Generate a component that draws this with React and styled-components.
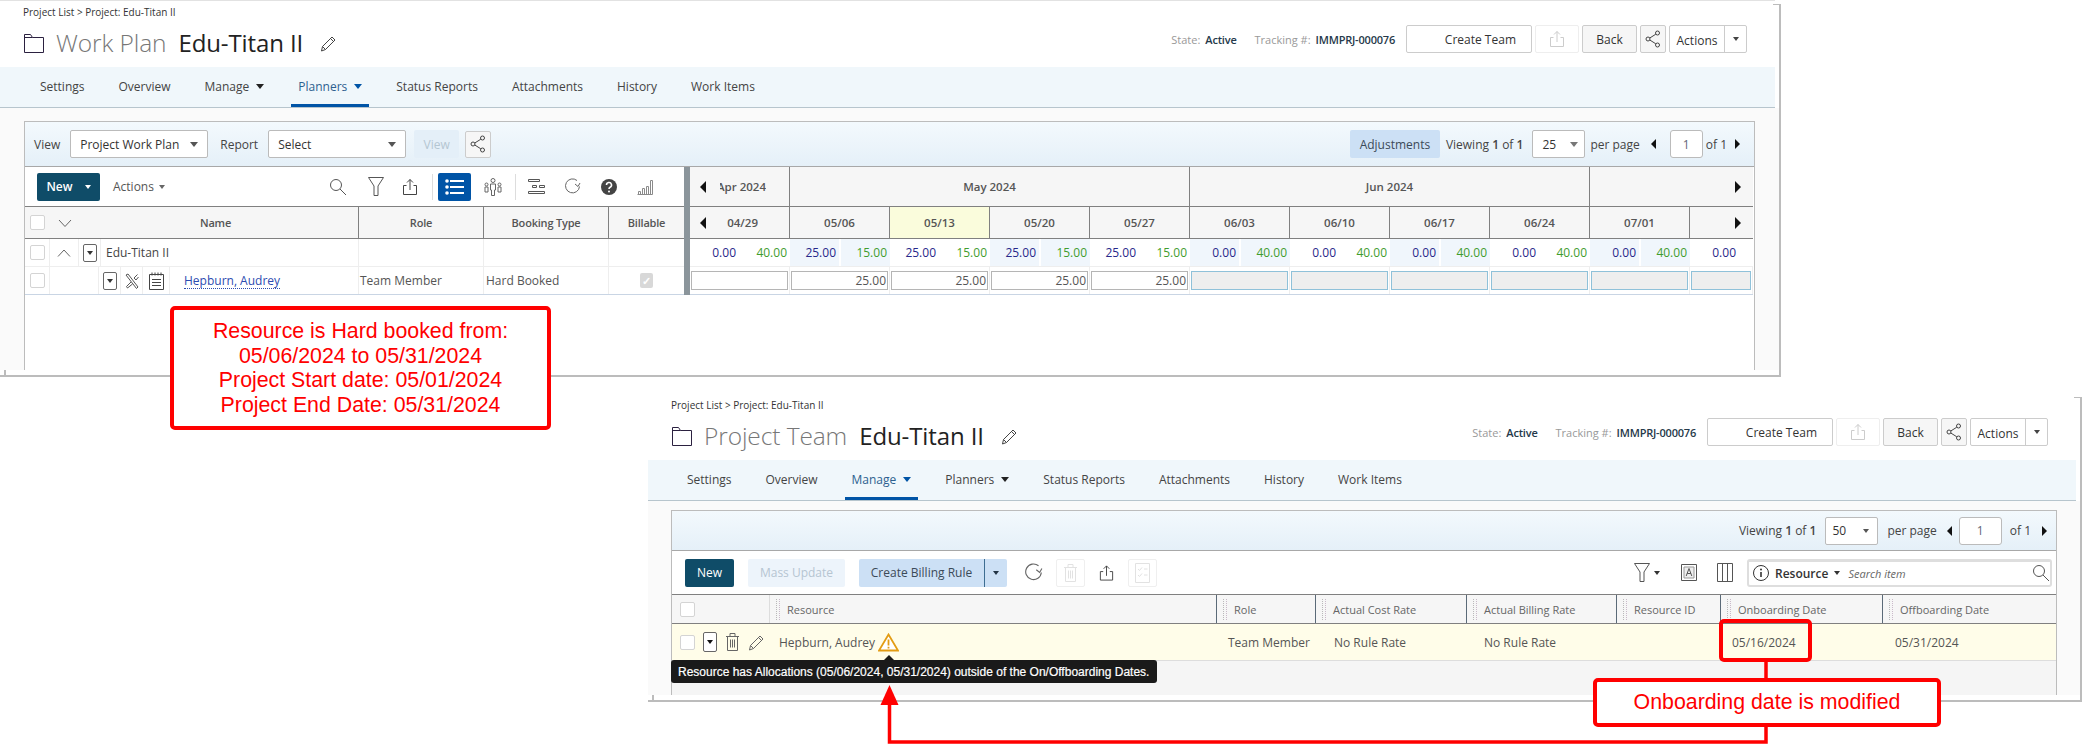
import React from 'react';
import styled, { createGlobalStyle } from 'styled-components';

const GlobalStyle = createGlobalStyle`
  html, body {
    margin: 0;
    padding: 0;
    background: #fff;
    font-family: "Open Sans", "Liberation Sans", sans-serif;
    font-size: 12px;
    color: #444;
  }
  * { box-sizing: border-box; }
`;

const Page = styled.div`
  position: relative;
  width: 2094px;
  height: 756px;
  overflow: hidden;
  background: #fff;
  &::before {
    content: '';
    position: absolute;
    left: 0;
    top: 0;
    width: 1775px;
    height: 1px;
    background: #e2e2e2;
  }
`;

// each screenshot sits on the page like a window on a canvas
const Window = styled.section`
  position: absolute;
  left: ${p => p.$left}px;
  top: ${p => p.$top}px;
  width: ${p => p.$width}px;
  height: ${p => p.$height}px;
  display: flex;
  flex-direction: column;
  padding-bottom: 5px;
  border-bottom: 2px solid #bcbcbc;
  &::before {
    content: '';
    position: absolute;
    left: ${p => p.$stub}px;
    bottom: 0;
    width: 2px;
    height: 5px;
    background: #bcbcbc;
  }
  &::after {
    content: '';
    position: absolute;
    right: 0;
    top: 4px;
    bottom: 0;
    width: 6px;
    border-top: 1px solid #bcbcbc;
    border-right: 2px solid #bcbcbc;
  }
`;

const Header = styled.header`
  height: 67px;
  flex: none;
  display: flex;
  justify-content: space-between;
  padding: 0 34px 0 23px;
`;

const Crumb = styled.div`
  font-size: 10px;
  line-height: 14px;
  padding-top: 5px;
  color: #333;
`;

const TitleRow = styled.h1`
  margin: 9px 0 0 1px;
  display: flex;
  align-items: center;
  height: 30px;
  font-weight: 400;
  font-size: 24px;
  letter-spacing: -0.1px;
  color: #222;
  svg { flex: none; }
`;

const TitleName = styled.span`
  padding-bottom: 2px;
`;

const TitleLabel = styled.span`
  color: #777;
  font-weight: 300;
  font-size: 24.5px;
  padding-bottom: 2px;
  margin: 0 12px 0 12px;
`;

const TitleEdit = styled.span`
  display: flex;
  margin-left: 17px;
`;

const HeadRight = styled.div`
  display: flex;
  align-items: flex-start;
  padding-top: 25px;
`;

const Meta = styled.div`
  display: flex;
  gap: 18px;
  height: 28px;
  align-items: center;
  margin-right: 11px;
  font-size: 11px;
  color: #999;
  b {
    font-weight: 600;
    letter-spacing: -0.2px;
    color: #25394a;
    margin-left: 5px;
  }
`;

const HeadButtons = styled.div`
  display: flex;
  gap: 3px;
`;

const HeadButton = styled.button`
  width: ${p => p.$w}px;
  height: 28px;
  padding: 0 ${p => p.$pad || 0}px 0 0;
  display: flex;
  align-items: center;
  justify-content: ${p => (p.$pad ? 'flex-end' : 'center')};
  background: ${p => p.$bg || '#fff'};
  border: 1px solid ${p => (p.$faint ? '#eee' : '#ccc')};
  border-radius: 2px;
  font: inherit;
  color: #333;
`;

const SplitMenu = styled.div`
  width: 78px;
  height: 28px;
  display: flex;
  border: 1px solid #ccc;
  border-radius: 2px;
  color: #333;
  span {
    width: 55px;
    line-height: 29px;
    text-align: center;
    border-right: 1px solid #ccc;
  }
  div {
    flex: 1;
    display: flex;
    align-items: center;
    justify-content: center;
  }
`;

const Nav = styled.nav`
  flex: none;
  height: 41px;
  margin-right: 6px;
  display: flex;
  gap: 20px;
  padding-left: ${p => p.$left}px;
  background: #f0f7fb;
  border-bottom: 1px solid #b7c5cd;
`;

const NavItem = styled.a`
  position: relative;
  display: flex;
  align-items: center;
  gap: 7px;
  padding: 0 7px 2px;
  color: ${p => (p.$active ? '#2d5f8f' : '#444')};
  &::after {
    content: '';
    display: ${p => (p.$active ? 'block' : 'none')};
    position: absolute;
    left: 0;
    right: 0;
    bottom: 0;
    height: 3px;
    background: #0054a6;
  }
`;

const Caret = styled.i`
  display: inline-block;
  flex: none;
  margin-left: ${p => p.$l || 0}px;
  border-left: ${p => p.$size || 4}px solid transparent;
  border-right: ${p => p.$size || 4}px solid transparent;
  border-top: ${p => (p.$size || 4) + 1}px solid ${p => p.$color || '#333'};
`;

const Content = styled.main`
  flex: 1;
  min-height: 0;
  display: flex;
  margin-right: 2px;
  padding: ${p => p.$top}px 0 0 ${p => p.$left}px;
  background: #fafafa;
`;

const Panel = styled.div`
  width: ${p => p.$width}px;
  display: flex;
  flex-direction: column;
  background: #fff;
  border: 1px solid #bcbcbc;
  border-bottom: 0;
`;

const Toolbar = styled.div`
  flex: none;
  height: ${p => p.$h}px;
  display: flex;
  align-items: center;
  padding: ${p => p.$pad};
  background: linear-gradient(#f3f9fd, #e5f0f8);
  border-bottom: 1px solid #a8a8a8;
`;

const Label = styled.span`
  margin: 0 ${p => p.$r || 0}px 0 ${p => (p.$auto ? 'auto' : `${p.$l || 0}px`)};
  white-space: nowrap;
  color: #444;
  b { font-weight: 600; }
`;

const Select = styled.div`
  width: ${p => p.$w}px;
  height: 28px;
  flex: none;
  margin-left: ${p => p.$l || 0}px;
  display: flex;
  align-items: center;
  justify-content: space-between;
  padding: 0 ${p => p.$arrow || 9}px 0 ${p => p.$text || 9}px;
  background: #fff;
  border: 1px solid #bbb;
  border-radius: 2px;
  color: #333;
`;

const SoftButton = styled.button`
  width: ${p => p.$w}px;
  height: 28px;
  flex: none;
  margin-left: ${p => (p.$auto ? 'auto' : `${p.$l || 0}px`)};
  border: 0;
  border-radius: 2px;
  background: ${p => p.$bg};
  color: ${p => p.$color};
  font: inherit;
`;

const ShareBox = styled.div`
  width: 26px;
  height: 27px;
  margin-left: 6px;
  display: flex;
  align-items: center;
  justify-content: center;
  background: #f6f6f6;
  border: 1px solid #ccc;
  border-radius: 2px;
`;

const PageInput = styled.div`
  width: ${p => p.$w}px;
  height: 28px;
  flex: none;
  margin: 0 ${p => p.$r}px 0 ${p => p.$l}px;
  display: flex;
  align-items: center;
  justify-content: center;
  background: #fff;
  border: 1px solid #bbb;
  border-radius: 3px;
  color: #667;
`;

const Tri = styled.i`
  flex: none;
  display: block;
  margin: ${p => p.$m || 0};
  border-top: ${p => p.$h || 4}px solid transparent;
  border-bottom: ${p => p.$h || 4}px solid transparent;
  ${p => (p.$dir === 'left' ? 'border-right' : 'border-left')}: ${p => p.$w || 4}px solid #111;
`;

const PlanBody = styled.div`
  flex: 1;
  display: flex;
  align-items: flex-start;
`;

const LeftPane = styled.div`
  width: 659px;
  flex: none;
`;

const Splitter = styled.div`
  width: 6px;
  height: 128px;
  flex: none;
  background: #8b959b;
`;

const RightPane = styled.div`
  width: 1063px;
  flex: none;
`;

const ToolRow = styled.div`
  height: ${p => p.$h}px;
  display: flex;
  align-items: center;
  padding: ${p => p.$pad};
  border-bottom: 1px solid #808080;
`;

const DarkButton = styled.button`
  height: 28px;
  width: ${p => p.$w}px;
  flex: none;
  display: flex;
  align-items: center;
  justify-content: center;
  gap: 12px;
  border: 0;
  border-radius: 2px;
  background: #0f4c68;
  color: #fff;
  font: inherit;
  font-weight: ${p => (p.$bold ? 600 : 400)};
`;

const GhostMenu = styled.div`
  display: flex;
  align-items: center;
  gap: 5px;
  margin-left: 13px;
  color: #555;
`;

const ToolGroup = styled.div`
  margin-left: auto;
  display: flex;
  align-items: center;
  height: 28px;
`;

const Slot = styled.span`
  width: ${p => p.$w}px;
  flex: none;
  margin-left: ${p => p.$l || 0}px;
  display: flex;
  align-items: center;
  justify-content: center;
`;

const ToolSep = styled.span`
  width: 1px;
  height: 26px;
  margin: 0 ${p => p.$r}px 0 ${p => p.$l}px;
  flex: none;
  background: #ddd;
`;

const ActiveTool = styled.span`
  width: 33px;
  height: 28px;
  flex: none;
  display: flex;
  align-items: center;
  justify-content: center;
  border-radius: 2px;
  background: #0054a6;
`;

const PlanGrid = styled.div`
  display: grid;
  grid-template-columns: 334px 125px 125px 75px;
  height: ${p => p.$h}px;
  background: ${p => p.$bg || '#fff'};
  border-bottom: 1px solid ${p => p.$line};
`;

const HeadCell = styled.div`
  display: flex;
  align-items: center;
  justify-content: center;
  font-size: 11px;
  font-weight: 600;
  letter-spacing: -0.2px;
  color: #555;
  border-right: 1px solid #808080;
  &:last-child { border-right: 0; }
`;

const BodyCell = styled.div`
  display: flex;
  align-items: center;
  justify-content: ${p => (p.$center ? 'center' : 'flex-start')};
  padding-left: ${p => p.$pad || 0}px;
  color: #555;
  border-right: 1px solid #eee;
  &:last-child { border-right: 0; }
`;

const Check = styled.span`
  display: block;
  width: 15px;
  height: 15px;
  flex: none;
  background: #fff;
  border: 1.5px solid #d4d4d4;
  border-radius: 2px;
`;

const SlotCell = styled.span`
  width: ${p => p.$w}px;
  flex: none;
  align-self: stretch;
  display: flex;
  align-items: center;
  justify-content: center;
  border-right: ${p => (p.$plain ? '0' : '1px solid #eee')};
`;

const HeadLabel = styled.span`
  flex: 1;
  padding-right: 6px;
  text-align: center;
`;

const RowMenu = styled.span`
  width: ${p => p.$w || 14}px;
  height: ${p => p.$h || 18}px;
  flex: none;
  display: flex;
  align-items: center;
  justify-content: center;
  border: 1px solid #666;
  border-radius: 2px;
  background: #fff;
`;

const PersonLink = styled.a`
  margin-left: 14px;
  color: #2c4bb0;
  border-bottom: 1px dotted #2c4bb0;
  line-height: 15px;
`;

const TickBox = styled.span`
  width: 13px;
  height: 15px;
  display: flex;
  align-items: center;
  justify-content: center;
  border-radius: 2px;
  background: #d8d8d8;
  color: #fff;
  font-size: 11px;
  font-weight: 700;
`;

const TimeRow = styled.div`
  display: flex;
  height: ${p => p.$h}px;
  background: #fff;
  border-bottom: 1px solid ${p => p.$line};
`;

const TimeHead = styled.div`
  width: ${p => p.$w}px;
  flex: none;
  display: flex;
  align-items: center;
  justify-content: ${p => p.$justify || 'center'};
  padding: ${p => p.$pad || 0};
  font-size: 11.5px;
  font-weight: 600;
  color: #555;
  background: ${p => (p.$today ? '#fafcdc' : '#f6f6f6')};
  border-right: 1px solid #808080;
  &:last-child { border-right: 0; }
`;

const ClipText = styled.span`
  width: ${p => p.$w}px;
  margin-left: ${p => p.$l}px;
  overflow: hidden;
  display: flex;
  justify-content: flex-end;
  white-space: nowrap;
`;

const HoursCol = styled.div`
  width: ${p => p.$w}px;
  flex: none;
  display: flex;
  gap: 2px;
`;

const Hours = styled.div`
  width: 49px;
  flex: none;
  display: flex;
  align-items: center;
  justify-content: flex-end;
  padding-right: 3px;
  background: ${p => (p.$shade ? '#f0f6fc' : '#fff')};
  color: ${p => (p.$free ? '#3f9d2e' : '#27278a')};
`;

const BookCol = styled.div`
  width: ${p => p.$w}px;
  flex: none;
  padding: 4px 1px;
  border-right: 1px solid #eee;
`;

const BookInput = styled.div`
  height: 19px;
  display: flex;
  align-items: center;
  justify-content: flex-end;
  padding-right: 1px;
  color: #555;
  background: ${p => (p.$locked ? '#eee' : '#fff')};
  border: 1px solid ${p => (p.$locked ? '#8fc1d9' : '#b5b5b5')};
`;

const MassTool = styled.div`
  display: flex;
  align-items: center;
  gap: 13px;
  margin-left: 14px;
`;

const BillingButton = styled.div`
  width: 148px;
  height: 28px;
  display: flex;
  border-radius: 2px;
  background: #cce0f5;
  color: #3b4a58;
  span {
    width: 126px;
    line-height: 28px;
    text-align: center;
    border-right: 1px solid #3d6d91;
  }
  div {
    flex: 1;
    display: flex;
    align-items: center;
    justify-content: center;
  }
`;

const FaintBox = styled.span`
  width: 29px;
  height: 28px;
  display: flex;
  align-items: center;
  justify-content: center;
  border: 1px solid #efefef;
  border-radius: 2px;
`;

const SearchBox = styled.div`
  width: 305px;
  height: 28px;
  margin-left: 14px;
  display: flex;
  align-items: center;
  padding: 0 0 0 4px;
  border: 2px solid #dedede;
  border-top-width: 3px;
  border-radius: 3px;
  b {
    font-weight: 600;
    color: #333;
    margin: 0 6px;
  }
  em {
    margin-left: 8px;
    flex: 1;
    font-size: 11px;
    color: #666;
  }
`;

const TeamGrid = styled.div`
  flex: none;
  display: grid;
  grid-template-columns: 97px 447px 99px 151px 150px 104px 162px 174px;
  height: ${p => p.$h}px;
  background: ${p => p.$bg};
  border-bottom: 1px solid ${p => p.$line};
`;

const ColHead = styled.div`
  position: relative;
  display: flex;
  align-items: center;
  gap: 7px;
  padding-left: 6px;
  font-size: 11px;
  color: #666;
  border-left: ${p => (p.$sizer ? '1px solid #5b6a78' : '1px solid #ddd')};
  &:first-child {
    border-left: 0;
    padding-left: 8px;
  }
`;

const DragDots = styled.i`
  display: block;
  width: 4px;
  height: 21px;
  flex: none;
  border-left: 1px dotted #b9b9b9;
  border-right: 1px dotted #c9b9c9;
`;

const TeamCell = styled.div`
  display: flex;
  align-items: center;
  padding-left: ${p => p.$pad}px;
  color: #555;
  grid-column: span ${p => p.$span || 1};
`;

const RowIcons = styled.div`
  display: flex;
  align-items: center;
  margin-right: 14px;
  gap: 8px;
  margin-left: 8px;
`;

const WarnSlot = styled.span`
  display: flex;
  margin-left: 3px;
`;

const TeamEmpty = styled.div`
  flex: 1;
  background: #f5f5f5;
`;

const Tooltip = styled.div`
  position: absolute;
  left: 671px;
  top: 660px;
  width: 486px;
  height: 23px;
  display: flex;
  align-items: center;
  padding-left: 7px;
  border-radius: 3px;
  background: #1a1a1a;
  color: #fff;
  font-family: "Liberation Sans", Arial, sans-serif;
  font-size: 12px;
  -webkit-text-stroke: 0.2px #fff;
  white-space: nowrap;
  &::before {
    content: '';
    position: absolute;
    left: 213px;
    top: -5px;
    border-left: 5px solid transparent;
    border-right: 5px solid transparent;
    border-bottom: 5px solid #1a1a1a;
  }
`;

const Callout = styled.div`
  position: absolute;
  left: ${p => p.$left}px;
  top: ${p => p.$top}px;
  width: ${p => p.$w}px;
  height: ${p => p.$h}px;
  display: flex;
  flex-direction: column;
  align-items: center;
  justify-content: center;
  background: ${p => (p.$ring ? 'transparent' : '#fff')};
  border: 4px solid #f00;
  border-radius: 5px;
  color: #f00;
  font-family: "Liberation Sans", Arial, sans-serif;
  font-size: 21.33px;
  line-height: 24.5px;
`;

const Connectors = styled.svg`
  position: absolute;
  left: 0;
  top: 0;
  pointer-events: none;
`;

const Line = ({ children, w = 16, h = 16, stroke = '#444', vb }) => (
  <svg width={w} height={h} viewBox={vb || `0 0 ${w} ${h}`} fill="none" stroke={stroke} strokeWidth="1">
    {children}
  </svg>
);

const FolderIcon = () => (
  <Line w={20} h={20}>
    <path d="M.5 19.5V1.5h6l2 3h11v15z" stroke="#2b2140" />
    <path d="M.5 4.5h8" stroke="#2b2140" />
  </Line>
);

const PencilIcon = ({ s = 17, c = '#444' }) => (
  <Line w={s} h={s} vb="0 0 17 17" stroke={c}>
    <path d="M2.5 11.5 12 2l3 3-9.5 9.5-4 1.5zM10.5 3.5l3 3M2.5 11.5l3 3" />
  </Line>
);

const ExportIcon = ({ c = '#444', s = 18 }) => (
  <Line w={s} h={s} vb="0 0 18 18" stroke={c}>
    <path d="M5.5 7.5h-3v9h13v-9h-3M9 12V1.5M6 4.5l3-3 3 3" />
  </Line>
);

const ShareIcon = () => (
  <Line w={16} h={18}>
    <circle cx="3" cy="9" r="2" />
    <circle cx="12.5" cy="3" r="2" />
    <circle cx="12.5" cy="15" r="2" />
    <path d="m4.8 8 6-3.8M4.8 10l6 3.8" />
  </Line>
);

const SearchIcon = ({ s = 18 }) => (
  <Line w={s} h={s} vb="0 0 18 18" stroke="#555">
    <circle cx="7" cy="7" r="5.5" />
    <path d="m11 11 6 6" />
  </Line>
);

const FilterIcon = ({ w = 16, h = 19 }) => (
  <Line w={w} h={h} vb="0 0 16 19" stroke="#555">
    <path d="M.5.5h15L10 9v9.5H6V9z" />
  </Line>
);

const ListIcon = () => (
  <svg width="19" height="16" viewBox="0 0 19 16" fill="#fff">
    <circle cx="2" cy="2" r="1.8" />
    <circle cx="2" cy="8" r="1.8" />
    <circle cx="2" cy="14" r="1.8" />
    <rect x="5" y="1" width="14" height="2" />
    <rect x="5" y="7" width="14" height="2" />
    <rect x="5" y="13" width="14" height="2" />
  </svg>
);

const PeopleIcon = () => (
  <Line w={18} h={18} stroke="#666">
    <circle cx="9" cy="2.5" r="2" />
    <path d="M6.5 6h5v6h-1v5.5h-3V12h-1z" />
    <circle cx="2.5" cy="6.5" r="1.5" />
    <path d="M1 9h3v5H1zM14 9h3v5h-3z" />
    <circle cx="15.5" cy="6.5" r="1.5" />
  </Line>
);

const GanttIcon = () => (
  <Line w={17} h={17} stroke="#555">
    <path d="M.5 1.5h11v2H.5zM4.5 7.5h4v2h-4zM11.5 7.5h5v2h-5zM.5 13.5h16v2H.5z" />
  </Line>
);

const RefreshIcon = ({ s = 17 }) => (
  <Line w={s} h={s} vb="0 0 17 17" stroke="#666">
    <path d="M13 2.5A7 7 0 1 0 15.5 8.5" />
    <path d="m11 6 3 2.5L16 5" />
  </Line>
);

const HelpIcon = () => (
  <svg width="16" height="16" viewBox="0 0 16 16">
    <circle cx="8" cy="8" r="8" fill="#444" />
    <path d="M5.5 6a2.5 2.5 0 1 1 3.6 2.2c-.8.4-1.100.8-1.100 1.800" fill="none" stroke="#fff" strokeWidth="1.6" />
    <circle cx="8" cy="12.5" r="1" fill="#fff" />
  </svg>
);

const ChartIcon = () => (
  <Line w={16} h={16} stroke="#8a8a8a">
    <path d="M.5 15.5h15M1.5 15.5v-3h2v3M5.5 15.5v-6h2v6M9.5 15.5v-8h2v8M13.5 15.5V1.5h2v14" />
  </Line>
);

const ChevronIcon = ({ up }) => (
  <Line w={14} h={8} stroke="#666">
    <path d={up ? 'M1 7.5 7 1l6 6.5' : 'M1 1l6 6.5L13 1'} />
  </Line>
);

const ToolsIcon = () => (
  <Line w={14} h={16} stroke="#555">
    <path d="m1 2 2-1 10 13-1.5 1.5zM12.5 1.5 9 5l2 2 2.5-3M6 9 1.5 13.5l1 1.5L7.5 11" />
  </Line>
);

const NotesIcon = () => (
  <Line w={17} h={18} stroke="#444">
    <path d="M1.5 2.5h14v15h-14zM4 .5v3M7 .5v3M10 .5v3M13 .5v3M4 7.5h9M4 10.5h9M4 13.5h9" />
  </Line>
);

const TrashIcon = ({ c = '#666' }) => (
  <Line w={15} h={20} stroke={c}>
    <path d="M1 4.5h13M5 4.5v-3h5v3M2.5 4.5v14h10v-14M5.5 7.5v8M7.5 7.5v8M9.5 7.5v8" />
  </Line>
);

const ChecklistIcon = () => (
  <Line w={15} h={20} stroke="#e2e2e2">
    <path d="M.5.5h14v19H.5zM3 6l1.5 1.5L7 4.5M9 6h3.5M3 12l1.5 1.5L7 10.5M9 12h3.5" />
  </Line>
);

const LetterIcon = () => (
  <svg width="16" height="19" viewBox="0 0 16 19" fill="none" stroke="#555">
    <path d="M.5 1.5h15v16H.5z" />
    <path d="M3 4h10v11H3z" fill="#eee" stroke="#999" />
    <path d="M5.2 13 8 5.5l2.8 7.5M6.2 10.5h3.6" />
  </svg>
);

const ColumnsIcon = () => (
  <Line w={16} h={19} stroke="#555">
    <path d="M.5 .5h15v18H.5zM5.5.5v18M10.5.5v18" />
  </Line>
);

const InfoIcon = () => (
  <svg width="16" height="16" viewBox="0 0 16 16" fill="none" stroke="#333">
    <circle cx="8" cy="8" r="7.5" />
    <path d="M8 7v5" strokeWidth="1.6" />
    <circle cx="8" cy="4.5" r="1" fill="#333" stroke="none" />
  </svg>
);

const WarnIcon = () => (
  <svg width="21" height="19" viewBox="0 0 21 19" fill="#fff" stroke="#e39c14" strokeWidth="1.8">
    <path d="M10.5 1.5 20 17.5H1z" />
    <path d="M10.5 6.5v6M10.5 13.8v1.800" />
  </svg>
);

const PageHeader = ({ label }) => (
  <Header>
    <div>
      <Crumb>Project List &gt; Project: Edu-Titan II</Crumb>
      <TitleRow>
        <FolderIcon />
        <TitleLabel>{label}</TitleLabel>
        <TitleName>Edu-Titan II</TitleName>
        <TitleEdit><PencilIcon /></TitleEdit>
      </TitleRow>
    </div>
    <HeadRight>
      <Meta>
        <span>State:<b>Active</b></span>
        <span>Tracking #:<b>IMMPRJ-000076</b></span>
      </Meta>
      <HeadButtons>
        <HeadButton $w={126} $pad={15}>Create Team</HeadButton>
        <HeadButton $w={44} $faint><ExportIcon c="#ccc" /></HeadButton>
        <HeadButton $w={55} $bg="#f6f6f6">Back</HeadButton>
        <HeadButton $w={26} $bg="#f6f6f6"><ShareIcon /></HeadButton>
        <SplitMenu>
          <span>Actions</span>
          <div><Caret $size={3.5} $color="#444" /></div>
        </SplitMenu>
      </HeadButtons>
    </HeadRight>
  </Header>
);

const navItems = [
  { name: 'Settings' },
  { name: 'Overview' },
  { name: 'Manage', menu: true },
  { name: 'Planners', menu: true },
  { name: 'Status Reports' },
  { name: 'Attachments' },
  { name: 'History' },
  { name: 'Work Items' },
];

const PageNav = ({ active, left }) => (
  <Nav $left={left}>
    {navItems.map(item => (
      <NavItem key={item.name} $active={item.name === active}>
        {item.name}
        {item.menu && <Caret $color={item.name === active ? '#0054a6' : '#222'} />}
      </NavItem>
    ))}
  </Nav>
);

const weeks = [
  { week: '05/06', booked: '25.00', free: '15.00', input: '25.00', shade: true },
  { week: '05/13', booked: '25.00', free: '15.00', input: '25.00', today: true },
  { week: '05/20', booked: '25.00', free: '15.00', input: '25.00', shade: true },
  { week: '05/27', booked: '25.00', free: '15.00', input: '25.00' },
  { week: '06/03', booked: '0.00', free: '40.00', shade: true, locked: true },
  { week: '06/10', booked: '0.00', free: '40.00', locked: true },
  { week: '06/17', booked: '0.00', free: '40.00', shade: true, locked: true },
  { week: '06/24', booked: '0.00', free: '40.00', locked: true },
  { week: '07/01', booked: '0.00', free: '40.00', shade: true, locked: true },
];

const WorkPlan = () => (
  <Window $left={0} $top={0} $width={1781} $height={377} $stub={4}>
    <PageHeader label="Work Plan" />
    <PageNav active="Planners" left={33} />
    <Content $top={13} $left={24}>
      <Panel $width={1731}>
        <Toolbar $h={45} $pad="0 14px 0 9px">
          <Label $r={10}>View</Label>
          <Select $w={138}>Project Work Plan<Caret $size={4.5} $color="#555" /></Select>
          <Label $l={12} $r={10}>Report</Label>
          <Select $w={138}>Select<Caret $size={4.5} $color="#555" /></Select>
          <SoftButton $w={45} $l={8} $bg="#e4eff8" $color="#b4c6d2">View</SoftButton>
          <ShareBox><ShareIcon /></ShareBox>
          <SoftButton $w={90} $auto $bg="#cce0f5" $color="#3b4a58">Adjustments</SoftButton>
          <Label $l={6}>Viewing <b>1</b> of <b>1</b></Label>
          <Select $w={53} $l={9} $arrow={6} $text={9}>25<Caret $size={4.5} $color="#777" /></Select>
          <Label $l={5}>per page</Label>
          <Tri $dir="left" $h={5} $w={5} $m="0 0 0 11px" />
          <PageInput $w={33} $l={14} $r={3}>1</PageInput>
          <Label>of 1</Label>
          <Tri $dir="right" $h={5} $w={5} $m="0 0 0 8px" />
        </Toolbar>
        <PlanBody>
          <LeftPane>
            <ToolRow $h={40} $pad="0 24px 0 12px">
              <DarkButton $w={63} $bold>New<Caret $size={3.5} $color="#fff" /></DarkButton>
              <GhostMenu>Actions<Caret $size={3.5} $color="#666" /></GhostMenu>
              <ToolGroup>
                <Slot $w={38}><SearchIcon /></Slot>
                <Slot $w={38}><FilterIcon /></Slot>
                <Slot $w={30}><ExportIcon /></Slot>
                <ToolSep $l={7} $r={5} />
                <ActiveTool><ListIcon /></ActiveTool>
                <Slot $w={44}><PeopleIcon /></Slot>
                <ToolSep $l={0} $r={0} />
                <Slot $w={40}><GanttIcon /></Slot>
                <Slot $w={32}><RefreshIcon /></Slot>
                <Slot $w={42}><HelpIcon /></Slot>
                <Slot $w={30}><ChartIcon /></Slot>
              </ToolGroup>
            </ToolRow>
            <PlanGrid $h={32} $bg="#f6f6f6" $line="#808080">
              <HeadCell>
                <SlotCell $w={25} $plain><Check /></SlotCell>
                <SlotCell $w={29} $plain><ChevronIcon /></SlotCell>
                <HeadLabel>Name</HeadLabel>
              </HeadCell>
              <HeadCell>Role</HeadCell>
              <HeadCell>Booking Type</HeadCell>
              <HeadCell>Billable</HeadCell>
            </PlanGrid>
            <PlanGrid $h={28} $line="#eee">
              <BodyCell>
                <SlotCell $w={25}><Check /></SlotCell>
                <SlotCell $w={29}><ChevronIcon up /></SlotCell>
                <SlotCell $w={22}><RowMenu><Caret $size={3} /></RowMenu></SlotCell>
                <Label $l={5}>Edu-Titan II</Label>
              </BodyCell>
              <BodyCell />
              <BodyCell />
              <BodyCell />
            </PlanGrid>
            <PlanGrid $h={28} $line="#c9d5e4">
              <BodyCell>
                <SlotCell $w={25}><Check /></SlotCell>
                <SlotCell $w={49} />
                <SlotCell $w={22}><RowMenu><Caret $size={3} /></RowMenu></SlotCell>
                <SlotCell $w={22}><ToolsIcon /></SlotCell>
                <SlotCell $w={27}><NotesIcon /></SlotCell>
                <PersonLink>Hepburn, Audrey</PersonLink>
              </BodyCell>
              <BodyCell $pad={1}>Team Member</BodyCell>
              <BodyCell $pad={2}>Hard Booked</BodyCell>
              <BodyCell $center><TickBox>✓</TickBox></BodyCell>
            </PlanGrid>
          </LeftPane>
          <Splitter />
          <RightPane>
            <TimeRow $h={40} $line="#808080">
              <TimeHead $w={100} $justify="flex-start" $pad="0 0 0 10px">
                <Tri $dir="left" $h={6} $w={6} />
                <ClipText $l={14} $w={46}>Apr 2024</ClipText>
              </TimeHead>
              <TimeHead $w={400}>May 2024</TimeHead>
              <TimeHead $w={400}>Jun 2024</TimeHead>
              <TimeHead $w={163} $justify="flex-end" $pad="0 12px 0 0"><Tri $dir="right" $h={6} $w={6} /></TimeHead>
            </TimeRow>
            <TimeRow $h={32} $line="#808080">
              <TimeHead $w={100} $justify="flex-start" $pad="0 0 0 10px">
                <Tri $dir="left" $h={6} $w={6} />
                <ClipText $l={20} $w={32}>04/29</ClipText>
              </TimeHead>
              {weeks.map(w => <TimeHead key={w.week} $w={100} $today={w.today}>{w.week}</TimeHead>)}
              <TimeHead $w={63} $justify="flex-end" $pad="0 12px 0 0"><Tri $dir="right" $h={6} $w={6} /></TimeHead>
            </TimeRow>
            <TimeRow $h={28} $line="#eee">
              <HoursCol $w={100}>
                <Hours>0.00</Hours>
                <Hours $free>40.00</Hours>
              </HoursCol>
              {weeks.map(w => (
                <HoursCol key={w.week} $w={100}>
                  <Hours $shade={w.shade}>{w.booked}</Hours>
                  <Hours $shade={w.shade} $free>{w.free}</Hours>
                </HoursCol>
              ))}
              <HoursCol $w={63}><Hours>0.00</Hours></HoursCol>
            </TimeRow>
            <TimeRow $h={28} $line="#c9d5e4">
              <BookCol $w={100}><BookInput /></BookCol>
              {weeks.map(w => (
                <BookCol key={w.week} $w={100}>
                  <BookInput $locked={w.locked}>{w.input}</BookInput>
                </BookCol>
              ))}
              <BookCol $w={63}><BookInput $locked /></BookCol>
            </TimeRow>
          </RightPane>
        </PlanBody>
      </Panel>
    </Content>
  </Window>
);

const teamCols = ['Resource', 'Role', 'Actual Cost Rate', 'Actual Billing Rate', 'Resource ID', 'Onboarding Date', 'Offboarding Date'];

const ProjectTeam = () => (
  <Window $left={648} $top={393} $width={1434} $height={309} $stub={4}>
    <PageHeader label="Project Team" />
    <PageNav active="Manage" left={32} />
    <Content $top={9} $left={23}>
      <Panel $width={1386}>
        <Toolbar $h={40} $pad="0 9px 0 9px">
          <Label $auto>Viewing <b>1</b> of <b>1</b></Label>
          <Select $w={53} $l={9} $text={6} $arrow={8}>50<Caret $size={3.5} $color="#555" /></Select>
          <Label $l={9}>per page</Label>
          <Tri $dir="left" $h={5} $w={5} $m="0 0 0 10px" />
          <PageInput $w={43} $l={7} $r={8}>1</PageInput>
          <Label>of 1</Label>
          <Tri $dir="right" $h={5} $w={5} $m="0 0 0 11px" />
        </Toolbar>
        <ToolRow $h={44} $pad="0 4px 0 13px">
          <DarkButton $w={49}>New</DarkButton>
          <SoftButton $w={97} $l={14} $bg="#edf4fb" $color="#b6c5d2">Mass Update</SoftButton>
          <MassTool>
            <BillingButton>
              <span>Create Billing Rule</span>
              <div><Caret $size={3.5} $color="#234" /></div>
            </BillingButton>
            <Slot $w={19} $l={4}><RefreshIcon s={19} /></Slot>
            <FaintBox><TrashIcon c="#e2e2e2" /></FaintBox>
            <Slot $w={17}><ExportIcon s={18} /></Slot>
            <FaintBox><ChecklistIcon /></FaintBox>
          </MassTool>
          <ToolGroup>
            <FilterIcon w={16} h={19} />
            <Caret $size={3.5} $l={4} />
            <Slot $w={16} $l={21}><LetterIcon /></Slot>
            <Slot $w={16} $l={20}><ColumnsIcon /></Slot>
            <SearchBox>
              <InfoIcon />
              <b>Resource</b>
              <Caret $size={3.5} />
              <em>Search item</em>
              <SearchIcon />
            </SearchBox>
          </ToolGroup>
        </ToolRow>
        <TeamGrid $h={29} $bg="#f6f6f6" $line="#808080">
          <ColHead><Check /></ColHead>
          {teamCols.map((col, i) => (
            <ColHead key={col} $sizer={i > 0}><DragDots />{col}</ColHead>
          ))}
        </TeamGrid>
        <TeamGrid $h={37} $bg="#fffde9" $line="#ddd">
          <TeamCell $pad={8} $span={2}>
            <Check />
            <RowIcons>
              <RowMenu $w={14} $h={20}><Caret $size={3.5} $color="#111" /></RowMenu>
              <TrashIcon />
              <PencilIcon s={17} c="#666" />
            </RowIcons>
            Hepburn, Audrey
            <WarnSlot><WarnIcon /></WarnSlot>
          </TeamCell>
          <TeamCell $pad={12}>Team Member</TeamCell>
          <TeamCell $pad={19}>No Rule Rate</TeamCell>
          <TeamCell $pad={18}>No Rule Rate</TeamCell>
          <TeamCell $pad={0} />
          <TeamCell $pad={12}>05/16/2024</TeamCell>
          <TeamCell $pad={13}>05/31/2024</TeamCell>
        </TeamGrid>
        <TeamEmpty />
      </Panel>
    </Content>
  </Window>
);

export default function App() {
  return (
    <>
      <GlobalStyle />
      <Page>
        <WorkPlan />
        <ProjectTeam />
        <Tooltip>Resource has Allocations (05/06/2024, 05/31/2024) outside of the On/Offboarding Dates.</Tooltip>
        <Connectors width="2094" height="756" fill="none" stroke="#f00" strokeWidth="3.5">
          <path d="M1766 660v20M1766 725v17H889.5v-38" />
          <path d="M880.5 705h18l-9-20z" fill="#f00" stroke="none" />
        </Connectors>
        <Callout $left={170} $top={306} $w={381} $h={124}>
          <span>Resource is Hard booked from:</span>
          <span>05/06/2024 to 05/31/2024</span>
          <span>Project Start date: 05/01/2024</span>
          <span>Project End Date: 05/31/2024</span>
        </Callout>
        <Callout $ring $left={1719} $top={619} $w={93} $h={43} />
        <Callout $left={1593} $top={678} $w={348} $h={49}>Onboarding date is modified</Callout>
      </Page>
    </>
  );
}
